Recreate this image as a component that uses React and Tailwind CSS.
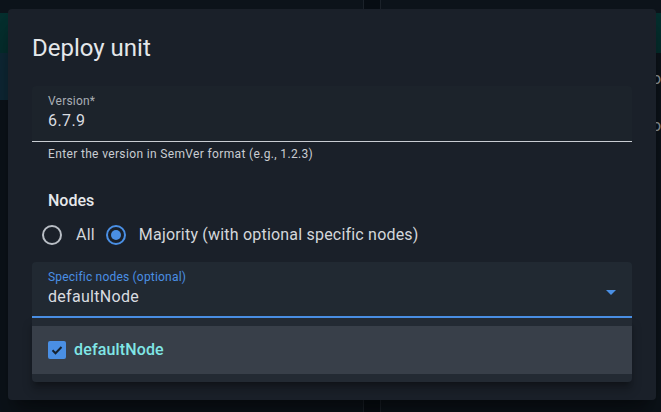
import React from 'react';

const Radio = ({ checked }) =>
  checked ? (
    <span className="flex h-[20px] w-[20px] items-center justify-center rounded-full border-2 border-[#4a8fe4]">
      <span className="h-[10px] w-[10px] rounded-full bg-[#4a8fe4]" />
    </span>
  ) : (
    <span className="h-[20px] w-[20px] rounded-full border-2 border-[#b9bec5]" />
  );

const App = () => {
  return (
    <div className="relative h-[412px] w-[661px] overflow-hidden bg-[#0d141b] font-['Roboto',sans-serif]">
      {/* app behind the modal */}
      <div className="flex h-full">
        <div className="flex w-[363px] shrink-0 flex-col">
          <div className="h-[13px]" />
          <div className="h-[40px] bg-[#05302f]" />
          <div className="h-[47px] bg-[#0f2a38]" />
        </div>
        <div className="w-[18px] shrink-0 border-x border-[#1c232b] bg-[#080e14]" />
        <div className="flex min-w-0 flex-1 flex-col overflow-hidden">
          <div className="h-[13px]" />
          <div className="h-[40px] bg-[#05302f]" />
          <div className="mt-[14px] whitespace-nowrap pl-[271px] text-[16px] leading-[24px] text-[#9aa0a6]">oll</div>
          <div className="mt-[23px] whitespace-nowrap pl-[271px] text-[16px] leading-[24px] text-[#9aa0a6]">oo</div>
        </div>
      </div>

      {/* dialog */}
      <div className="absolute left-2 top-[9px] h-[391px] w-[648px] rounded bg-[#1a2029] px-6 pt-[23px] shadow-[0_11px_15px_-7px_rgba(0,0,0,0.4),0_24px_38px_3px_rgba(0,0,0,0.3)]">
        <h2 className="text-[24px] leading-[32px] text-[#e4e7ea]">Deploy unit</h2>

        <div className="mt-[22px] rounded-t border-b border-[#c9cdd3] bg-[#1c232b] px-4 pb-[8px] pt-[7px]">
          <div className="text-[12px] leading-[16px] tracking-[0.2px] text-[#a9aeb5]">Version*</div>
          <div className="text-[16px] leading-[24px] tracking-[0.4px] text-[#d9dce0]">6.7.9</div>
        </div>
        <p className="mt-[4px] px-4 text-[12px] leading-[16px] tracking-[0.35px] text-[#c9cdd2]">
          Enter the version in SemVer format (e.g., 1.2.3)
        </p>

        <div className="mt-[27px] px-4 text-[16px] font-medium leading-[24px] text-[#e6e8eb]">Nodes</div>
        <div className="mt-[1px] flex h-[42px] items-center pl-[10px] text-[16px] tracking-[0.2px] text-[#d4d7db]">
          <Radio />
          <span className="ml-[14px]">All</span>
          <span className="ml-[11px]">
            <Radio checked />
          </span>
          <span className="ml-[13px]">Majority (with optional specific nodes)</span>
        </div>

        <div className="mt-[6px] rounded-t border-b-2 border-[#4a8fe4] bg-[#212932] px-4 pb-[7px] pt-[7px]">
          <div className="text-[12px] leading-[16px] tracking-[0.2px] text-[#4a8fe4]">Specific nodes (optional)</div>
          <div className="flex items-center justify-between">
            <span className="text-[16px] leading-[24px] tracking-[0.3px] text-[#d9dce0]">defaultNode</span>
            <svg width="10" height="5" viewBox="0 0 10 5" className="-mt-[10px]">
              <path d="M0 0h10L5 5z" fill="#4a8fe4" />
            </svg>
          </div>
        </div>

        <div className="rounded-b bg-[#232a33] py-2 shadow-[0_5px_5px_-3px_rgba(0,0,0,0.3),0_8px_10px_1px_rgba(0,0,0,0.2)]">
          <div className="flex h-[48px] items-center bg-[#383f49] px-4">
            <span className="flex h-[18px] w-[18px] items-center justify-center rounded-[2px] bg-[#4a8fe4]">
              <svg width="14" height="14" viewBox="0 0 14 14">
                <path d="M2.5 7.2l3 3 6-6.2" fill="none" stroke="#152230" strokeWidth="2" />
              </svg>
            </span>
            <span className="ml-[8px] text-[16px] font-medium leading-[24px] tracking-[0.15px] text-[#80e6e6]">defaultNode</span>
          </div>
        </div>
      </div>
    </div>
  );
};

export default App;
